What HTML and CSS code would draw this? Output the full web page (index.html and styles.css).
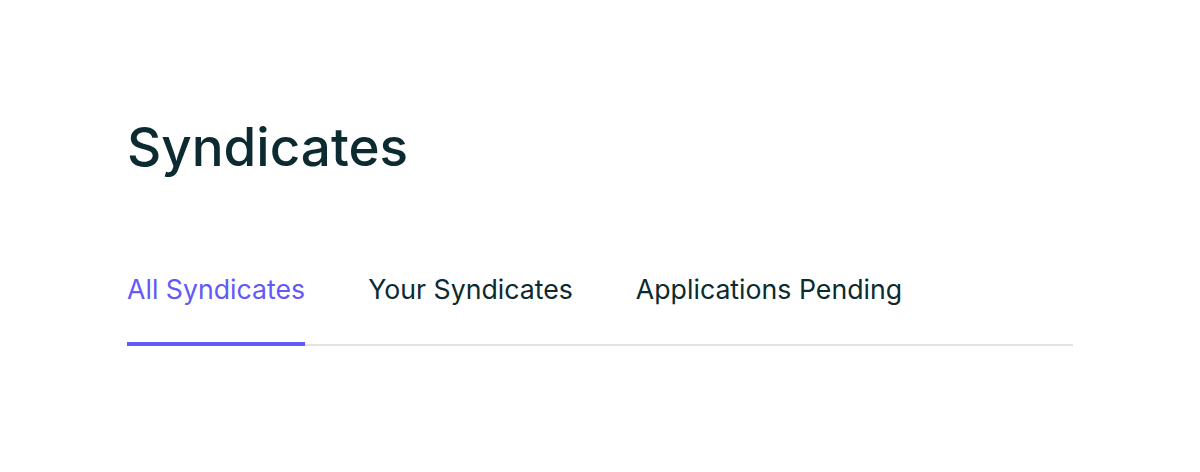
FILE: index.html
```html
<!DOCTYPE html>
<html lang="en">
<head>
<meta charset="utf-8">
<title>Syndicates</title>
<link rel="stylesheet" href="styles.css">
</head>
<body>
<main class="page">
  <h1 class="title">Syndicates</h1>
  <nav class="tabs">
    <a class="tab tab-active" href="#">All Syndicates</a>
    <a class="tab" href="#">Your Syndicates</a>
    <a class="tab" href="#">Applications Pending</a>
  </nav>
</main>
</body>
</html>
```
FILE: styles.css
```css
html, body {
  margin: 0;
  padding: 0;
  background: #ffffff;
}
body {
  font-family: Inter, "Noto Sans", sans-serif;
  color: #0c2b30;
}
.page {
  width: 946px;
  margin-left: 127px;
  padding-top: 111px;
}
.title {
  margin: 0;
  font-size: 53px;
  font-weight: 500;
  line-height: 72px;
  letter-spacing: 0;
  color: #0c2b30;
}
.tabs {
  display: flex;
  gap: 63px;
  margin-top: 90px;
  border-bottom: 2px solid #e4e4e6;
}
.tab {
  display: block;
  font-size: 26.7px;
  font-weight: 400;
  line-height: 32px;
  padding-bottom: 37px;
  margin-bottom: -2px;
  color: #0c2b30;
  text-decoration: none;
  border-bottom: 4px solid transparent;
}
.tab-active {
  color: #6359f6;
  border-bottom-color: #6359f6;
}
```
